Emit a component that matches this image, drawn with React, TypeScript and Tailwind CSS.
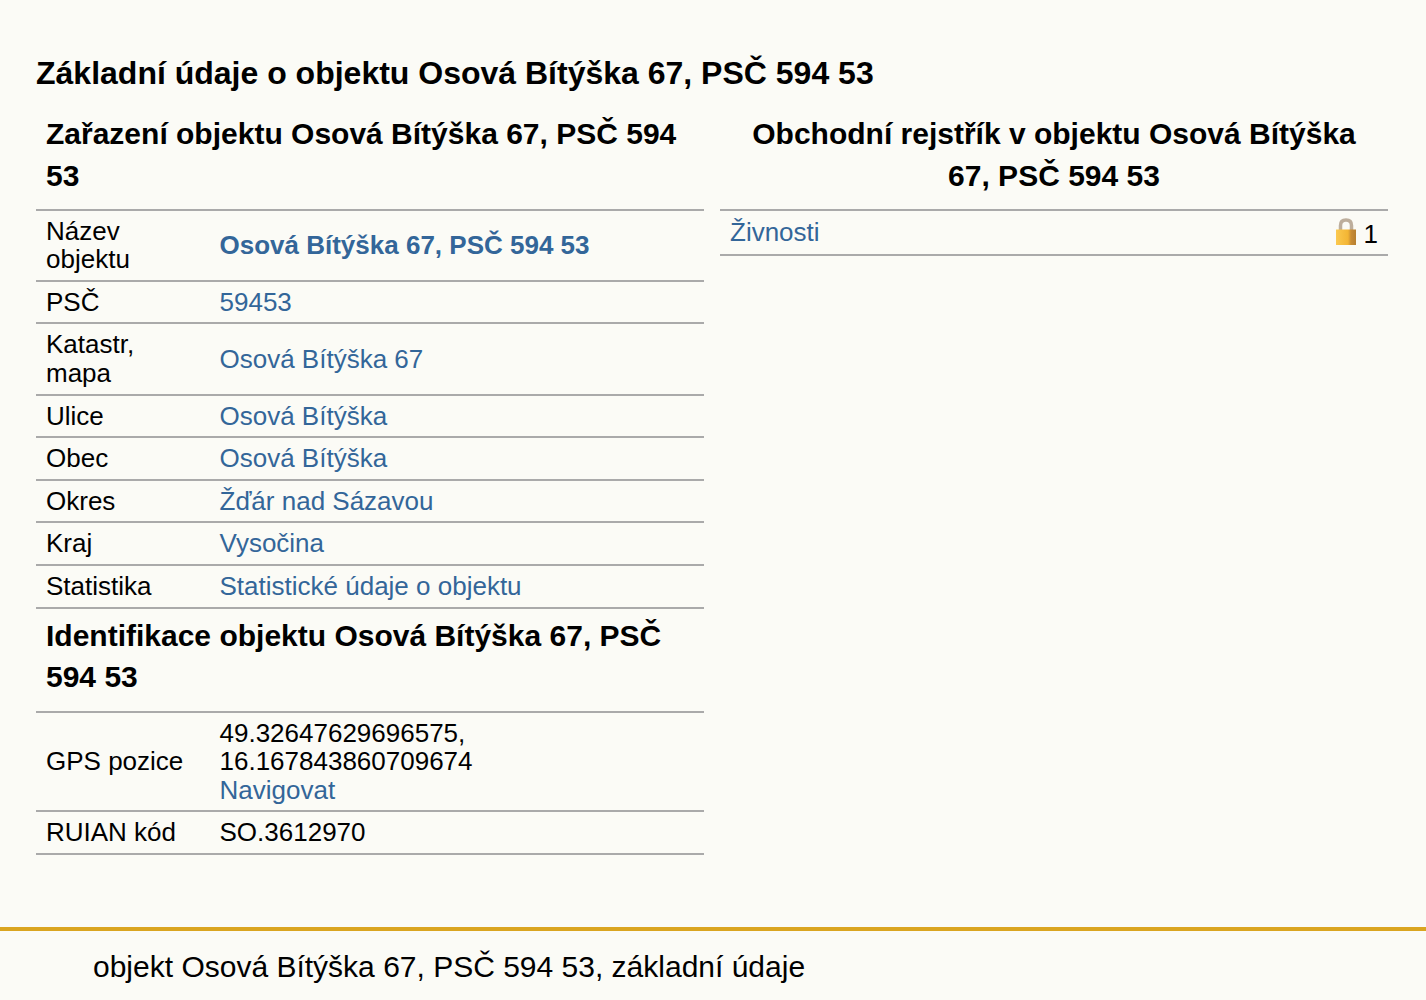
const rows: { label: string; value: string; bold?: boolean }[] = [
  { label: "Název objektu", value: "Osová Bítýška 67, PSČ 594 53", bold: true },
  { label: "PSČ", value: "59453" },
  { label: "Katastr, mapa", value: "Osová Bítýška 67" },
  { label: "Ulice", value: "Osová Bítýška" },
  { label: "Obec", value: "Osová Bítýška" },
  { label: "Okres", value: "Žďár nad Sázavou" },
  { label: "Kraj", value: "Vysočina" },
  { label: "Statistika", value: "Statistické údaje o objektu" },
]

function Lock() {
  return (
    <svg width="22" height="27" viewBox="0 0 22 27" className="block">
      <defs>
        <linearGradient id="lockBody" x1="0" y1="0" x2="1" y2="0">
          <stop offset="0" stopColor="#fbc94f" />
          <stop offset="0.6" stopColor="#f3b534" />
          <stop offset="0.75" stopColor="#c98d35" />
          <stop offset="1" stopColor="#b67f30" />
        </linearGradient>
      </defs>
      <path d="M5.5 12V7.5C5.500 4 7.500 2 11 2s5.500 2 5.500 5.500V12" fill="none" stroke="#bdae9c" strokeWidth="3.500" />
      <rect x="1" y="11.500" width="20" height="15.500" fill="url(#lockBody)" />
    </svg>
  )
}

export default function App() {
  return (
    <div className="min-h-[1000px] bg-[#fbfbf6] font-['Liberation_Sans',Arial,sans-serif] text-[26px] leading-[28.6px] text-black">
      <div className="h-[927px] px-9 pt-[52px]">
        <h1 className="text-[32px] font-bold leading-[42px]">
          Základní údaje o objektu Osová Bítýška 67, PSČ 594 53
        </h1>
        <div className="mt-[18px] flex gap-4 pr-[2px]">
          <div className="w-[668px]">
            <h2 className="h-[96.6px] px-[10px] pt-[1px] text-[30px] font-bold leading-[41.6px]">
              Zařazení objektu Osová Bítýška 67, PSČ 594 53
            </h2>
            {rows.map((r) => (
              <div key={r.label} className="flex items-center border-t-2 border-[#aaa] py-[6px]">
                <div className="w-[183.5px] shrink-0 pl-[10px] pr-10">{r.label}</div>
                <a className={r.bold ? "font-bold text-[#336699]" : "text-[#336699]"}>{r.value}</a>
              </div>
            ))}
            <h2 className="h-[104px] border-t-2 border-[#aaa] px-[10px] pt-[6px] text-[30px] font-bold leading-[41.6px]">
              Identifikace objektu Osová Bítýška 67, PSČ 594 53
            </h2>
            <div className="flex items-center border-t-2 border-[#aaa] py-[6px]">
              <div className="w-[183.5px] shrink-0 pl-[10px]">GPS pozice</div>
              <div>
                49.32647629696575,
                <br />
                16.167843860709674
                <br />
                <a className="text-[#336699]">Navigovat</a>
              </div>
            </div>
            <div className="flex items-center border-y-2 border-[#aaa] py-[6px]">
              <div className="w-[183.5px] shrink-0 pl-[10px]">RUIAN kód</div>
              <div>SO.3612970</div>
            </div>
          </div>
          <div className="w-[668px]">
            <h2 className="h-[96.6px] px-[10px] pt-[1px] text-center text-[30px] font-bold leading-[41.6px]">
              Obchodní rejstřík v objektu Osová Bítýška 67, PSČ 594 53
            </h2>
            <div className="flex h-[47.4px] items-start justify-between border-y-2 border-[#aaa] px-[10px] pt-[7px]">
              <a className="text-[#336699]">Živnosti</a>
              <div className="flex items-start gap-[6.5px]">
                <Lock />
                <span className="mt-[2px]">1</span>
              </div>
            </div>
          </div>
        </div>
      </div>
      <div className="h-[73px] border-t-4 border-[#daa520] pl-[93px] pt-[17px] text-[30px] leading-[37px]">
        objekt Osová Bítýška 67, PSČ 594 53, základní údaje
      </div>
    </div>
  )
}
